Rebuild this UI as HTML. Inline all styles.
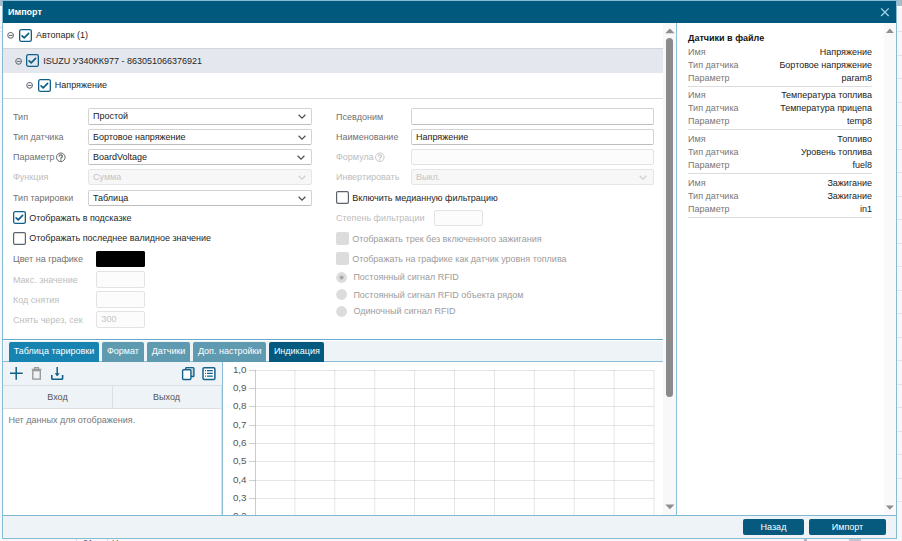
<!DOCTYPE html>
<html><head><meta charset="utf-8">
<style>
*{box-sizing:border-box}
html,body{margin:0;padding:0}
body{width:902px;height:541px;overflow:hidden;position:relative;background:#f6f7f8;font-family:"Liberation Sans",sans-serif;font-size:9px;color:#262626}
.a{position:absolute}
.t{position:absolute;white-space:nowrap;line-height:14px;height:14px;transform:scaleY(1.0);transform-origin:0 10px}
.lbl{color:#727272}
.dis{color:#bdbdbd}
.sel{position:absolute;left:88px;width:224px;height:16px;background:#fff;border:1px solid #d3d3d3;border-bottom-color:#bdbdbd;border-radius:2px}
.sel span{position:absolute;left:4px;top:0;line-height:14px;color:#222;white-space:nowrap;transform:scaleY(1.0);transform-origin:0 10px}
.sel.d{background:#f7f7f7;border-color:#e6e6e6}
.sel.d span{color:#c4c4c4}
.chev{position:absolute;right:6px;top:4.5px;width:8px;height:5px}
.inp{position:absolute;background:#fff;border:1px solid #d3d3d3;border-bottom-color:#bdbdbd;border-radius:2px;height:16px}
.inp.d{background:#fcfcfc;border-color:#e3e3e3}
.tab{position:absolute;top:342px;height:20px;color:#fff;padding:0 4.7px;border-radius:2px 2px 0 0;white-space:nowrap;background:#5f9bb1}
.tab span{display:block;line-height:19px;transform:scaleY(1.0);transform-origin:0 12.6px}
.gl{position:absolute;background:rgba(0,0,0,0.1)}
.yl{position:absolute;color:#555;line-height:12px;white-space:nowrap;text-align:right;font-size:9.8px;transform:scaleY(1.0);transform-origin:0 9.5px}
.rk{position:absolute;left:688px;color:#777;line-height:13px;white-space:nowrap;transform:scaleY(1.0);transform-origin:0 9.6px}
.rv{position:absolute;right:30px;color:#222;line-height:13px;white-space:nowrap;text-align:right;transform:scaleY(1.0);transform-origin:0 9.6px}
.sep{position:absolute;left:688px;width:184px;height:1px;background:#dcdcdc}
.btn{position:absolute;top:519px;height:16px;background:#065a7e;color:#fff;text-align:center;border-radius:2px}
.btn span{display:block;line-height:16px;transform:scaleY(1.0);transform-origin:0 11.1px}
</style></head><body>
<div class="a" style="left:0;top:0;width:902px;height:5.5px;background:#a9bdc8"></div>
<div class="a" style="left:0;top:6px;width:902px;height:2px;background:#fff"></div>
<div class="a" style="left:897px;top:31.0px;width:5px;height:1px;background:#e2e4e6"></div>
<div class="a" style="left:897px;top:54.5px;width:5px;height:1px;background:#e2e4e6"></div>
<div class="a" style="left:897px;top:78.0px;width:5px;height:1px;background:#e2e4e6"></div>
<div class="a" style="left:897px;top:101.5px;width:5px;height:1px;background:#e2e4e6"></div>
<div class="a" style="left:897px;top:125.0px;width:5px;height:1px;background:#e2e4e6"></div>
<div class="a" style="left:897px;top:148.5px;width:5px;height:1px;background:#e2e4e6"></div>
<div class="a" style="left:897px;top:172.0px;width:5px;height:1px;background:#e2e4e6"></div>
<div class="a" style="left:897px;top:195.5px;width:5px;height:1px;background:#e2e4e6"></div>
<div class="a" style="left:897px;top:219.0px;width:5px;height:1px;background:#e2e4e6"></div>
<div class="a" style="left:897px;top:242.5px;width:5px;height:1px;background:#e2e4e6"></div>
<div class="a" style="left:897px;top:266.0px;width:5px;height:1px;background:#e2e4e6"></div>
<div class="a" style="left:897px;top:289.5px;width:5px;height:1px;background:#e2e4e6"></div>
<div class="a" style="left:897px;top:313.0px;width:5px;height:1px;background:#e2e4e6"></div>
<div class="a" style="left:897px;top:336.5px;width:5px;height:1px;background:#e2e4e6"></div>
<div class="a" style="left:897px;top:360.0px;width:5px;height:1px;background:#e2e4e6"></div>
<div class="a" style="left:897px;top:383.5px;width:5px;height:1px;background:#e2e4e6"></div>
<div class="a" style="left:897px;top:407.0px;width:5px;height:1px;background:#e2e4e6"></div>
<div class="a" style="left:897px;top:430.5px;width:5px;height:1px;background:#e2e4e6"></div>
<div class="a" style="left:897px;top:454.0px;width:5px;height:1px;background:#e2e4e6"></div>
<div class="a" style="left:897px;top:477.5px;width:5px;height:1px;background:#e2e4e6"></div>
<div class="a" style="left:897px;top:501.0px;width:5px;height:1px;background:#e2e4e6"></div>
<div class="a" style="left:0;top:539px;width:902px;height:2px;background:#f7f7f7"></div>
<div class="a" style="left:75.5px;top:535px;width:1px;height:6px;background:#d6d6d6"></div>
<div class="a" style="left:106.5px;top:535px;width:1px;height:6px;background:#d6d6d6"></div>
<div class="t" style="left:83px;top:535.6px;color:#555">21</div>
<div class="t" style="left:112px;top:535.6px;color:#555">Начало простоя</div>
<div class="a" style="left:804px;top:539px;width:3px;height:2px;background:#b8b8b8"></div>
<div class="a" style="left:849px;top:539px;width:12px;height:2px;background:#c8c8c8"></div>
<div class="a" style="left:0;top:27px;width:2px;height:1px;background:#dcdcdc"></div>
<div class="a" style="left:0;top:31px;width:2px;height:1px;background:#e4e4e4"></div>
<div class="a" style="left:2px;top:0;width:895px;height:539px;border:1px solid #86bcd6;background:#fff"></div>
<div class="a" style="left:3px;top:1px;width:893px;height:22px;background:#015a7d"></div>
<div class="t " style="left:8px;top:5.20px;color:#fff;font-weight:bold">Импорт</div>
<svg class="a" style="left:880px;top:6.5px" width="10" height="10" viewBox="0 0 10 10"><path d="M1.1 1.4L8.7 9M8.7 1.4L1.1 9" stroke="#a3d2e6" stroke-width="1.3"/></svg>
<div class="a" style="left:3px;top:48px;width:660px;height:25px;background:#e4e8ee;border-top:1px solid #d2d6db"></div>
<div class="a" style="left:3px;top:98px;width:660px;height:1px;background:#d8dce0"></div>
<svg class="a" style="left:6px;top:31px" width="9" height="9" viewBox="0 0 9 9"><circle cx="4.6" cy="4.35" r="2.85" fill="none" stroke="#6e737a" stroke-width="1.05"/><path d="M3 4.45H6.6" stroke="#6e737a" stroke-width="1.1"/></svg>
<svg class="a" style="left:19px;top:29px" width="13" height="13" viewBox="0 0 13 13"><rect x="0.65" y="0.65" width="11.7" height="11.7" rx="1.6" fill="none" stroke="#0f5f86" stroke-width="1.3"/><path d="M3.1 6.8L5.2 8.8L9.6 4.3" fill="none" stroke="#0f5f86" stroke-width="1.7" stroke-linecap="round" stroke-linejoin="round"/></svg>
<div class="t " style="left:36px;top:28.30px;">Автопарк (1)</div>
<svg class="a" style="left:14px;top:56.5px" width="9" height="9" viewBox="0 0 9 9"><circle cx="4.6" cy="4.35" r="2.85" fill="none" stroke="#6e737a" stroke-width="1.05"/><path d="M3 4.45H6.6" stroke="#6e737a" stroke-width="1.1"/></svg>
<svg class="a" style="left:26px;top:54px" width="13" height="13" viewBox="0 0 13 13"><rect x="0.65" y="0.65" width="11.7" height="11.7" rx="1.6" fill="none" stroke="#0f5f86" stroke-width="1.3"/><path d="M3.1 6.8L5.2 8.8L9.6 4.3" fill="none" stroke="#0f5f86" stroke-width="1.7" stroke-linecap="round" stroke-linejoin="round"/></svg>
<div class="t " style="left:43.3px;top:53.60px;">ISUZU У340КК977 - 863051066376921</div>
<svg class="a" style="left:25px;top:81px" width="9" height="9" viewBox="0 0 9 9"><circle cx="4.6" cy="4.35" r="2.85" fill="none" stroke="#6e737a" stroke-width="1.05"/><path d="M3 4.45H6.6" stroke="#6e737a" stroke-width="1.1"/></svg>
<svg class="a" style="left:38px;top:79px" width="13" height="13" viewBox="0 0 13 13"><rect x="0.65" y="0.65" width="11.7" height="11.7" rx="1.6" fill="none" stroke="#0f5f86" stroke-width="1.3"/><path d="M3.1 6.8L5.2 8.8L9.6 4.3" fill="none" stroke="#0f5f86" stroke-width="1.7" stroke-linecap="round" stroke-linejoin="round"/></svg>
<div class="t " style="left:54.8px;top:78.30px;">Напряжение</div>
<div class="t lbl" style="left:13px;top:109.70px;">Тип</div>
<div class="sel" style="top:108.2px;height:16.6px"><span>Простой</span><svg class="chev" style="right:5.5px" viewBox="0 0 8 5"><path d="M0.6 0.8L4 4.1L7.4 0.8" fill="none" stroke="#505050" stroke-width="1.25"/></svg></div>
<div class="t lbl" style="left:13px;top:130.20px;">Тип датчика</div>
<div class="sel" style="top:129px;"><span>Бортовое напряжение</span><svg class="chev" style="right:5.5px" viewBox="0 0 8 5"><path d="M0.6 0.8L4 4.1L7.4 0.8" fill="none" stroke="#505050" stroke-width="1.25"/></svg></div>
<div class="t lbl" style="left:13px;top:150.20px;">Параметр</div>
<div class="sel" style="top:149px;"><span>BoardVoltage</span><svg class="chev" style="right:6.5px" viewBox="0 0 8 5"><path d="M0.6 0.8L4 4.1L7.4 0.8" fill="none" stroke="#505050" stroke-width="1.25"/></svg></div>
<div class="t dis" style="left:13px;top:170.40px;">Функция</div>
<div class="sel d" style="top:169.2px;"><span>Сумма</span><svg class="chev" style="right:5.5px" viewBox="0 0 8 5"><path d="M0.6 0.8L4 4.1L7.4 0.8" fill="none" stroke="#d0d0d0" stroke-width="1.25"/></svg></div>
<div class="t lbl" style="left:13px;top:191.20px;">Тип тарировки</div>
<div class="sel" style="top:190px;"><span>Таблица</span><svg class="chev" style="right:5.5px" viewBox="0 0 8 5"><path d="M0.6 0.8L4 4.1L7.4 0.8" fill="none" stroke="#505050" stroke-width="1.25"/></svg></div>
<svg class="a" style="left:55px;top:152.2px" width="11" height="11" viewBox="0 0 11 11"><circle cx="5.8" cy="5.3" r="4.3" fill="none" stroke="#666" stroke-width="1"/><path d="M4.2 4.4C4.2 3.4 4.9 2.9 5.8 2.9C6.7 2.9 7.4 3.5 7.4 4.3C7.4 5.1 6.7 5.4 6.2 5.8C5.9 6 5.8 6.3 5.8 6.7" fill="none" stroke="#666" stroke-width="1.25"/><circle cx="5.8" cy="8" r="0.75" fill="#666"/></svg>
<div class="t lbl" style="left:336px;top:109.50px;">Псевдоним</div>
<div class="t lbl" style="left:336px;top:130.20px;">Наименование</div>
<div class="t dis" style="left:336px;top:150.20px;">Формула</div>
<svg class="a" style="left:374px;top:152.2px" width="11" height="11" viewBox="0 0 11 11"><circle cx="5.8" cy="5.3" r="4.3" fill="none" stroke="#c8c8c8" stroke-width="1"/><path d="M4.2 4.4C4.2 3.4 4.9 2.9 5.8 2.9C6.7 2.9 7.4 3.5 7.4 4.3C7.4 5.1 6.7 5.4 6.2 5.8C5.9 6 5.8 6.3 5.8 6.7" fill="none" stroke="#c8c8c8" stroke-width="1.25"/><circle cx="5.8" cy="8" r="0.75" fill="#c8c8c8"/></svg>
<div class="t dis" style="left:336px;top:170.40px;">Инвертировать</div>
<div class="inp" style="left:411px;top:108.2px;width:242.5px;height:16.6px"></div>
<div class="inp" style="left:411px;top:129px;width:242.5px"><span class="t" style="left:4px;top:0;color:#222">Напряжение</span></div>
<div class="inp d" style="left:411px;top:149px;width:242.5px"></div>
<div class="sel d" style="left:411px;top:169.2px;width:242.5px"><span>Выкл.</span><svg class="chev" style="right:5.5px" viewBox="0 0 8 5"><path d="M0.6 0.8L4 4.1L7.4 0.8" fill="none" stroke="#d0d0d0" stroke-width="1.25"/></svg></div>
<svg class="a" style="left:13px;top:211px" width="13" height="13" viewBox="0 0 13 13"><rect x="0.65" y="0.65" width="11.7" height="11.7" rx="1.6" fill="none" stroke="#0f5f86" stroke-width="1.3"/><path d="M3.1 6.8L5.2 8.8L9.6 4.3" fill="none" stroke="#0f5f86" stroke-width="1.7" stroke-linecap="round" stroke-linejoin="round"/></svg>
<div class="t " style="left:29.3px;top:210.60px;">Отображать в подсказке</div>
<svg class="a" style="left:13px;top:232px" width="13" height="13" viewBox="0 0 13 13"><rect x="0.6" y="0.6" width="11.8" height="11.8" rx="1.3" fill="none" stroke="#5d636b" stroke-width="1.2"/></svg>
<div class="t " style="left:29.3px;top:231.40px;">Отображать последнее валидное значение</div>
<div class="t lbl" style="left:13px;top:251.50px;">Цвет на графике</div>
<div class="a" style="left:96px;top:250.6px;width:48.5px;height:16px;background:#000;border-radius:1.5px"></div>
<div class="t dis" style="left:13px;top:272.50px;">Макс. значение</div>
<div class="inp d" style="left:96px;top:271px;width:48.5px;height:17px"></div>
<div class="t dis" style="left:13px;top:292.60px;">Код снятия</div>
<div class="inp d" style="left:96px;top:291px;width:48.5px;height:17px"></div>
<div class="t dis" style="left:13px;top:312.60px;">Снять через, сек</div>
<div class="inp d" style="left:96px;top:311px;width:48.5px;height:17px"><span class="t" style="left:4.5px;top:0;color:#c4c4c4">300</span></div>
<svg class="a" style="left:336px;top:191px" width="13" height="13" viewBox="0 0 13 13"><rect x="0.6" y="0.6" width="11.8" height="11.8" rx="1.3" fill="none" stroke="#5d636b" stroke-width="1.2"/></svg>
<div class="t " style="left:352.2px;top:190.50px;">Включить медианную фильтрацию</div>
<div class="t dis" style="left:336px;top:210.80px;">Степень фильтрации</div>
<div class="inp d" style="left:434px;top:210.4px;width:48.5px;height:15.4px"></div>
<div class="a" style="left:336px;top:232px;width:13px;height:13px;background:#dcdcdc;border-radius:2px"></div>
<div class="t " style="left:352.2px;top:231.50px;color:#9c9c9c">Отображать трек без включенного зажигания</div>
<div class="a" style="left:336px;top:252px;width:13px;height:13px;background:#dcdcdc;border-radius:2px"></div>
<div class="t " style="left:352.2px;top:251.50px;color:#9c9c9c">Отображать на графике как датчик уровня топлива</div>
<svg class="a" style="left:336px;top:271.80px" width="11" height="11" viewBox="0 0 11 11"><circle cx="5.6" cy="5.5" r="5.4" fill="#dcdcdc"/><circle cx="5.6" cy="5.5" r="2.1" fill="#a9a9a9"/></svg>
<div class="t " style="left:353.4px;top:270.30px;color:#9c9c9c">Постоянный сигнал RFID</div>
<svg class="a" style="left:336px;top:289.10px" width="11" height="11" viewBox="0 0 11 11"><circle cx="5.6" cy="5.5" r="5.4" fill="#dcdcdc"/></svg>
<div class="t " style="left:353.4px;top:287.60px;color:#9c9c9c">Постоянный сигнал RFID объекта рядом</div>
<svg class="a" style="left:336px;top:305.90px" width="11" height="11" viewBox="0 0 11 11"><circle cx="5.6" cy="5.5" r="5.4" fill="#dcdcdc"/></svg>
<div class="t " style="left:353.4px;top:304.40px;color:#9c9c9c">Одиночный сигнал RFID</div>
<div class="a" style="left:3px;top:339px;width:660px;height:1px;background:#68aacd"></div>
<div class="a" style="left:3px;top:340px;width:660px;height:21.5px;background:#eef3f7;border-top:1px solid #fff;border-left:1px solid #fff"></div>
<div class="a" style="left:3px;top:361.4px;width:660px;height:1px;background:#8dbdd6"></div>
<div class="tab" style="left:9px;background:#1683b1"><span>Таблица тарировки</span></div>
<div class="tab" style="left:102.3px;background:#5e9ab0"><span>Формат</span></div>
<div class="tab" style="left:147px;background:#5e9ab0"><span>Датчики</span></div>
<div class="tab" style="left:193.2px;background:#5e9ab0"><span>Доп. настройки</span></div>
<div class="tab" style="left:269.2px;background:#045a7e"><span>Индикация</span></div>
<div class="a" style="left:3px;top:362.4px;width:219px;height:23px;background:#eef3f7"></div>
<svg class="a" style="left:9px;top:366px" width="15" height="15" viewBox="0 0 15 15"><path d="M1 7.2H13.7M7.2 1V13.7" stroke="#0f5f86" stroke-width="1.5"/></svg>
<svg class="a" style="left:31px;top:366px" width="12" height="15" viewBox="0 0 12 15"><path d="M0.7 3.4H10.4M3.7 3.2V1.6H7.5V3.2" fill="none" stroke="#9a9a9a" stroke-width="1.2"/><rect x="1.8" y="4.6" width="7.5" height="8.5" fill="none" stroke="#9a9a9a" stroke-width="1.4"/></svg>
<svg class="a" style="left:50px;top:366px" width="15" height="15" viewBox="0 0 15 15"><path d="M7.2 1V9.5" stroke="#0f5f86" stroke-width="1.5"/><path d="M4.6 7.3L7.2 10.2L9.8 7.3Z" fill="#0f5f86"/><path d="M1.8 9V12.4Q1.8 13.2 2.6 13.2H11.8Q12.6 13.2 12.6 12.4V9" fill="none" stroke="#0f5f86" stroke-width="1.6"/></svg>
<svg class="a" style="left:181px;top:366px" width="15" height="15" viewBox="0 0 15 15"><rect x="4.6" y="1.6" width="8.3" height="8.9" rx="0.8" fill="#c5d7df" stroke="#14628a" stroke-width="1.4"/><rect x="1.6" y="3.8" width="8.3" height="9.7" rx="0.9" fill="#fff" stroke="#14628a" stroke-width="1.4"/></svg>
<svg class="a" style="left:201px;top:366px" width="15" height="15" viewBox="0 0 15 15"><rect x="2" y="1.8" width="11.9" height="11.8" rx="1.3" fill="#fff" stroke="#14628a" stroke-width="1.5"/><path d="M6 4.6H11.8M6 7.4H11.8M6 10.2H11.8" stroke="#14628a" stroke-width="1.3"/><path d="M4.1 4.6H5M4.1 7.4H5M4.1 10.2H5" stroke="#14628a" stroke-width="1.3"/></svg>
<div class="a" style="left:3px;top:385px;width:219px;height:24px;background:#eef3f7;border-top:1px solid #dcdfe2;border-bottom:1px solid #dcdfe2"></div>
<div class="a" style="left:112px;top:385px;width:1px;height:23px;background:#dcdfe2"></div>
<div class="a" style="left:221px;top:385px;width:1px;height:130px;background:#dcdfe2"></div>
<div class="t" style="left:3px;top:389.6px;width:109px;text-align:center;color:#555;transform-origin:50% 10px">Вход</div>
<div class="t" style="left:112px;top:389.6px;width:109px;text-align:center;color:#555;transform-origin:50% 10px">Выход</div>
<div class="t " style="left:8.4px;top:413.00px;color:#777">Нет данных для отображения.</div>
<div class="a" style="left:222px;top:362.4px;width:1px;height:153px;background:#8dbdd6"></div>
<div class="a" style="left:223px;top:362px;width:440px;height:153px;overflow:hidden">
<div class="gl" style="left:32px;top:8.00px;width:399px;height:1px"></div>
<div class="gl" style="left:26px;top:8.00px;width:6px;height:1px;background:#d0d0d0"></div>
<div class="yl" style="left:3px;top:2.20px;width:20.5px">1,0</div>
<div class="gl" style="left:32px;top:26.00px;width:399px;height:1px"></div>
<div class="gl" style="left:26px;top:26.00px;width:6px;height:1px;background:#d0d0d0"></div>
<div class="yl" style="left:3px;top:20.20px;width:20.5px">0,9</div>
<div class="gl" style="left:32px;top:44.00px;width:399px;height:1px"></div>
<div class="gl" style="left:26px;top:44.00px;width:6px;height:1px;background:#d0d0d0"></div>
<div class="yl" style="left:3px;top:38.20px;width:20.5px">0,8</div>
<div class="gl" style="left:32px;top:63.00px;width:399px;height:1px"></div>
<div class="gl" style="left:26px;top:63.00px;width:6px;height:1px;background:#d0d0d0"></div>
<div class="yl" style="left:3px;top:57.20px;width:20.5px">0,7</div>
<div class="gl" style="left:32px;top:81.00px;width:399px;height:1px"></div>
<div class="gl" style="left:26px;top:81.00px;width:6px;height:1px;background:#d0d0d0"></div>
<div class="yl" style="left:3px;top:75.20px;width:20.5px">0,6</div>
<div class="gl" style="left:32px;top:99.00px;width:399px;height:1px"></div>
<div class="gl" style="left:26px;top:99.00px;width:6px;height:1px;background:#d0d0d0"></div>
<div class="yl" style="left:3px;top:93.20px;width:20.5px">0,5</div>
<div class="gl" style="left:32px;top:118.00px;width:399px;height:1px"></div>
<div class="gl" style="left:26px;top:118.00px;width:6px;height:1px;background:#d0d0d0"></div>
<div class="yl" style="left:3px;top:112.20px;width:20.5px">0,4</div>
<div class="gl" style="left:32px;top:136.00px;width:399px;height:1px"></div>
<div class="gl" style="left:26px;top:136.00px;width:6px;height:1px;background:#d0d0d0"></div>
<div class="yl" style="left:3px;top:130.20px;width:20.5px">0,3</div>
<div class="gl" style="left:32px;top:154.00px;width:399px;height:1px"></div>
<div class="gl" style="left:26px;top:154.00px;width:6px;height:1px;background:#d0d0d0"></div>
<div class="yl" style="left:3px;top:148.20px;width:20.5px">0,2</div>
<div class="gl" style="left:32px;top:8px;width:1px;height:200px;background:rgba(0,0,0,0.2)"></div>
<svg class="a" style="left:0;top:8px" width="440" height="200"><rect x="71.40" y="0" width="1" height="200" fill="rgba(0,0,0,0.1)"/><rect x="111.30" y="0" width="1" height="200" fill="rgba(0,0,0,0.1)"/><rect x="151.20" y="0" width="1" height="200" fill="rgba(0,0,0,0.1)"/><rect x="191.10" y="0" width="1" height="200" fill="rgba(0,0,0,0.1)"/><rect x="231.00" y="0" width="1" height="200" fill="rgba(0,0,0,0.1)"/><rect x="270.90" y="0" width="1" height="200" fill="rgba(0,0,0,0.1)"/><rect x="310.80" y="0" width="1" height="200" fill="rgba(0,0,0,0.1)"/><rect x="350.70" y="0" width="1" height="200" fill="rgba(0,0,0,0.1)"/><rect x="390.60" y="0" width="1" height="200" fill="rgba(0,0,0,0.1)"/><rect x="430.50" y="0" width="1" height="200" fill="rgba(0,0,0,0.1)"/></svg>
</div>
<div class="a" style="left:663px;top:23px;width:13px;height:492px;background:#f8f8f8"></div>
<svg class="a" style="left:665px;top:28px" width="10" height="6" viewBox="0 0 10 6"><path d="M0.3 5.3L4.9 0.5L9.5 5.3Z" fill="#8e8e8e"/></svg>
<div class="a" style="left:666px;top:38px;width:7px;height:359px;background:#8a8a8a;border-radius:3.5px"></div>
<svg class="a" style="left:665px;top:504px" width="10" height="6" viewBox="0 0 10 6"><path d="M0.3 0.6L4.9 5.3L9.5 0.6Z" fill="#8e8e8e"/></svg>
<div class="a" style="left:676px;top:23px;width:1px;height:492px;background:#8cc0da"></div>
<div class="a" style="left:884px;top:23px;width:12px;height:492px;background:#f9f9f9"></div>
<svg class="a" style="left:885px;top:28px" width="10" height="6" viewBox="0 0 10 6"><path d="M0.9 5.1L4.9 0.4L8.8 5.1Z" fill="#8e8e8e"/></svg>
<svg class="a" style="left:885px;top:504.5px" width="10" height="6" viewBox="0 0 10 6"><path d="M0.9 0.6L4.9 4.7L8.8 0.6Z" fill="#8e8e8e"/></svg>
<div class="t " style="left:688px;top:31.00px;font-weight:bold;color:#111">Датчики в файле</div>
<div class="rk" style="top:45.60px">Имя</div>
<div class="rv" style="top:45.60px;right:30px;transform-origin:100% 9.6px">Напряжение</div>
<div class="rk" style="top:58.60px">Тип датчика</div>
<div class="rv" style="top:58.60px;right:30px;transform-origin:100% 9.6px">Бортовое напряжение</div>
<div class="rk" style="top:71.60px">Параметр</div>
<div class="rv" style="top:71.60px;right:30px;transform-origin:100% 9.6px">param8</div>
<div class="sep" style="top:85.60px"></div>
<div class="rk" style="top:89.27px">Имя</div>
<div class="rv" style="top:89.27px;right:30px;transform-origin:100% 9.6px">Температура топлива</div>
<div class="rk" style="top:102.27px">Тип датчика</div>
<div class="rv" style="top:102.27px;right:30px;transform-origin:100% 9.6px">Температура прицепа</div>
<div class="rk" style="top:115.27px">Параметр</div>
<div class="rv" style="top:115.27px;right:30px;transform-origin:100% 9.6px">temp8</div>
<div class="sep" style="top:129.27px"></div>
<div class="rk" style="top:132.94px">Имя</div>
<div class="rv" style="top:132.94px;right:30px;transform-origin:100% 9.6px">Топливо</div>
<div class="rk" style="top:145.94px">Тип датчика</div>
<div class="rv" style="top:145.94px;right:30px;transform-origin:100% 9.6px">Уровень топлива</div>
<div class="rk" style="top:158.94px">Параметр</div>
<div class="rv" style="top:158.94px;right:30px;transform-origin:100% 9.6px">fuel8</div>
<div class="sep" style="top:172.94px"></div>
<div class="rk" style="top:176.61px">Имя</div>
<div class="rv" style="top:176.61px;right:30px;transform-origin:100% 9.6px">Зажигание</div>
<div class="rk" style="top:189.61px">Тип датчика</div>
<div class="rv" style="top:189.61px;right:30px;transform-origin:100% 9.6px">Зажигание</div>
<div class="rk" style="top:202.61px">Параметр</div>
<div class="rv" style="top:202.61px;right:30px;transform-origin:100% 9.6px">in1</div>
<div class="sep" style="top:216.61px"></div>
<div class="a" style="left:3px;top:515px;width:893px;height:1px;background:#7fb7d3"></div>
<div class="a" style="left:3px;top:516px;width:893px;height:22px;background:#eef3f7"></div>
<div class="btn" style="left:743px;width:61px"><span>Назад</span></div>
<div class="btn" style="left:809px;width:77px"><span>Импорт</span></div>
</body></html>
